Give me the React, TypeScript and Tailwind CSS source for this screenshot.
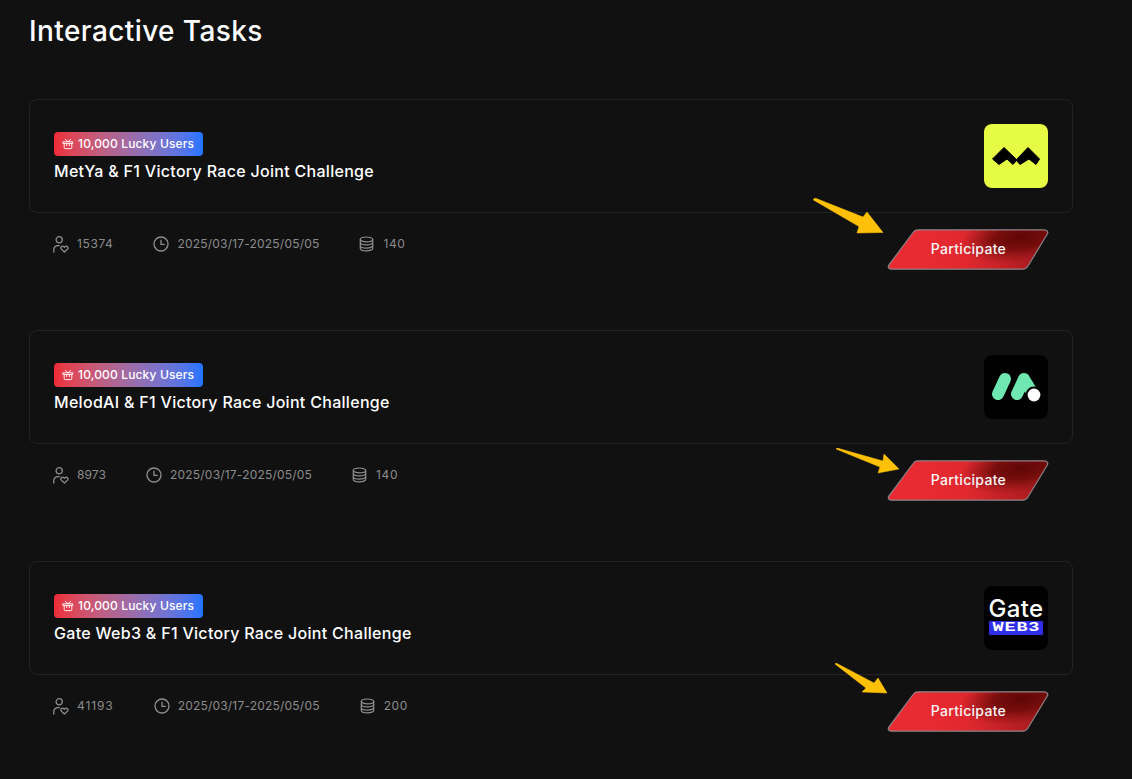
const font = { fontFamily: "Inter, 'Open Sans', sans-serif" };

function Gift() {
  return (
    <svg width="12" height="12" viewBox="0 0 12 12" fill="none" stroke="#fff" strokeWidth="0.9" strokeLinecap="round" strokeLinejoin="round">
      <path d="M1.2 3.8h9.6v1.6H1.2z" />
      <path d="M2.2 5.4v4.2a1 1 0 0 0 1 1h5.6a1 1 0 0 0 1-1V5.4" />
      <path d="M4.7 5.4v2.2M7.3 5.4v2.2M3.4 1.4 6 3.8l2.6-2.4" />
    </svg>
  );
}

function UserHeart() {
  return (
    <svg width="16" height="17" viewBox="0 0 16 17" fill="none" stroke="#8f8f8f" strokeWidth="1.3" strokeLinecap="round" strokeLinejoin="round">
      <circle cx="6.2" cy="3.8" r="3.1" />
      <path d="M.8 16v-2.4a4 4 0 0 1 4-4h1.6" />
      <path d="M11.4 16 8.3 13.1a1.7 1.7 0 0 1 2.6-2.3l.5.5.5-.5a1.7 1.7 0 0 1 2.6 2.3z" />
    </svg>
  );
}

function Clock() {
  return (
    <svg width="16" height="16" viewBox="0 0 16 16" fill="none" stroke="#8f8f8f" strokeWidth="1.3" strokeLinecap="round" strokeLinejoin="round">
      <circle cx="8" cy="8" r="7" />
      <path d="M8 4.2V8.4h3.2" />
    </svg>
  );
}

function Coins() {
  return (
    <svg width="15" height="16" viewBox="0 0 15 16" fill="none" stroke="#8f8f8f" strokeWidth="1.2" strokeLinecap="round" strokeLinejoin="round">
      <ellipse cx="7.5" cy="3.4" rx="6.2" ry="2.4" />
      <path d="M1.3 3.4v3.1c0 1.3 2.8 2.4 6.2 2.4s6.2-1.1 6.2-2.4V3.4" />
      <path d="M1.3 6.6v3.1c0 1.3 2.8 2.4 6.2 2.4s6.2-1.1 6.2-2.4V6.6" />
      <path d="M1.3 9.8v2.6c0 1.3 2.8 2.4 6.2 2.4s6.2-1.1 6.2-2.4V9.8" />
    </svg>
  );
}

function MetyaLogo() {
  return (
    <div className="flex h-16 w-16 shrink-0 items-center justify-center rounded-lg bg-[#e6fb44]">
      <svg width="50" height="20" viewBox="-1 -1 50 20">
        <path
          d="M12 .5 .5 12 7 17.5 15 12 21 17.5 24.5 13.5 28 17.5 37 12 44 17.5 47.5 12 36 .5 24.5 12.5z"
          fill="#000"
          stroke="#000"
          strokeWidth="1"
          strokeLinejoin="round"
        />
      </svg>
    </div>
  );
}

function MelodLogo() {
  return (
    <div className="h-16 w-16 shrink-0 rounded-lg bg-black">
      <svg width="64" height="64" viewBox="0 0 64 64" fill="none">
        <path d="M14 39 21 24" stroke="#6ee7b0" strokeWidth="12" strokeLinecap="round" />
        <path d="M33 39 40 24 46 34" stroke="#6ee7b0" strokeWidth="12" strokeLinecap="round" strokeLinejoin="round" />
        <circle cx="50" cy="40" r="8.5" fill="#000" />
        <circle cx="50" cy="40" r="6.4" fill="#fff" />
      </svg>
    </div>
  );
}

function GateLogo() {
  return (
    <div className="flex h-16 w-16 shrink-0 flex-col items-center justify-start rounded-lg bg-black pt-[14px]">
      <span className="text-[24px] font-medium leading-[18px] tracking-[0.3px] text-white" style={font}>Gate</span>
      <div className="mt-[3px] flex h-[14px] w-[54px] items-center justify-center overflow-hidden rounded-[1px] bg-[#2f2fe8]">
        <span className="scale-x-[1.55] text-[12px] font-bold leading-none tracking-[0.5px] text-white" style={{ fontFamily: "'Liberation Mono', monospace" }}>WEB3</span>
      </div>
    </div>
  );
}

const shape = "M26.5 3C27.8 1.2 29 .8 31 .8h126c3 0 4.6 2 3.3 4.2L141 37c-1.4 2.2-2.8 3.2-5 3.2H5c-3.4 0-4.6-2-3-4.4z";

function ParticipateButton() {
  return (
    <div className="relative flex h-[41px] w-[162px] items-center justify-center">
      <svg className="absolute inset-0" width="162" height="41" viewBox="0 0 162 41">
        <defs>
          <linearGradient id="partBase" gradientUnits="userSpaceOnUse" x1="30" y1="30" x2="150" y2="20">
            <stop offset="0" stopColor="#e92a33" />
            <stop offset="0.4" stopColor="#e1282f" />
            <stop offset="1" stopColor="#a61b1e" />
          </linearGradient>
          <radialGradient id="partDark" gradientUnits="userSpaceOnUse" cx="0" cy="0" r="1" gradientTransform="translate(134 8) rotate(-8) scale(62 25)">
            <stop offset="0" stopColor="#5f0705" stopOpacity="1" />
            <stop offset="0.45" stopColor="#6c0a08" stopOpacity="0.85" />
            <stop offset="1" stopColor="#8a1214" stopOpacity="0" />
          </radialGradient>
        </defs>
        <path d={shape} fill="url(#partBase)" />
        <path d={shape} fill="url(#partDark)" stroke="#8b8286" strokeWidth="1.2" />
      </svg>
      <span className="relative mb-[2px] pl-[1px] text-sm font-medium tracking-[0.3px] text-[#f5f5f5]" style={font}>Participate</span>
    </div>
  );
}

type Task = {
  title: string;
  count: string;
  countClass: string;
  points: string;
  logo: React.ReactNode;
  arrow: string;
  box: string;
};

const tasks: Task[] = [
  {
    title: "MetYa & F1 Victory Race Joint Challenge",
    count: "15374",
    countClass: "tracking-[0.6px]",
    points: "140",
    logo: <MetyaLogo />,
    arrow: "0,1.7 2,0 50,19 54,14 70,34.5 44,35 46,28.5",
    box: "left-[813px] top-[198px]",
  },
  {
    title: "MelodAI & F1 Victory Race Joint Challenge",
    count: "8973",
    countClass: "tracking-[0.1px]",
    points: "140",
    logo: <MelodLogo />,
    arrow: "0,1 1,0 47,13 48,6 63,21 42,25 44,19",
    box: "left-[836px] top-[448px]",
  },
  {
    title: "Gate Web3 & F1 Victory Race Joint Challenge",
    count: "41193",
    countClass: "tracking-[0.9px]",
    points: "200",
    logo: <GateLogo />,
    arrow: "0,1 1,0 39,20 43,15 52,30 27,29 31,25",
    box: "left-[835px] top-[663px]",
  },
];

function Row({ t }: { t: Task }) {
  return (
    <section>
      <div className="flex h-[114px] items-center justify-between rounded-lg border border-[#232323] p-6">
        <div className="flex flex-col items-start gap-[3px] pt-[3px]">
          <div className="flex h-6 w-[149px] items-center gap-1 rounded bg-gradient-to-r from-[#ee2a36] to-[#1f74ff] pl-2 text-xs font-medium tracking-[0.15px] text-white" style={font}>
            <Gift />
            <span>10,000 Lucky Users</span>
          </div>
          <h2 className="text-base font-medium leading-[24px] tracking-[0.3px] text-white" style={font}>{t.title}</h2>
        </div>
        {t.logo}
      </div>
      <div className="mt-4 flex h-[41px] justify-between pr-6 pl-6">
        <div className="flex h-[30px] items-center gap-10 text-xs text-[#8c8c8c]" style={font}>
          <div className="flex items-center gap-2"><UserHeart /><span className={t.countClass}>{t.count}</span></div>
          <div className="flex items-center gap-2"><Clock /><span className="tracking-[0.2px]">2025/03/17-2025/05/05</span></div>
          <div className="flex items-center gap-[9px]"><Coins /><span className="tracking-[0.6px]">{t.points}</span></div>
        </div>
        <ParticipateButton />
      </div>
    </section>
  );
}

export default function App() {
  return (
    <div className="relative h-[779px] w-[1132px] overflow-hidden bg-[#111112] pl-[29px] pr-[59px]">
      <h1 className="pt-[12px] text-[28px] font-medium leading-[38px] tracking-[0.4px] text-white" style={font}>Interactive Tasks</h1>
      <div className="mt-[49px] flex flex-col gap-[60px]">
        {tasks.map((t) => <Row key={t.title} t={t} />)}
      </div>
      {tasks.map((t) => (
        <svg key={t.arrow} className={`absolute ${t.box}`} width="72" height="38" viewBox="0 0 72 38">
          <polygon points={t.arrow} fill="#ffc107" stroke="#ffc107" strokeWidth="0.5" strokeLinejoin="round" />
        </svg>
      ))}
    </div>
  );
}
